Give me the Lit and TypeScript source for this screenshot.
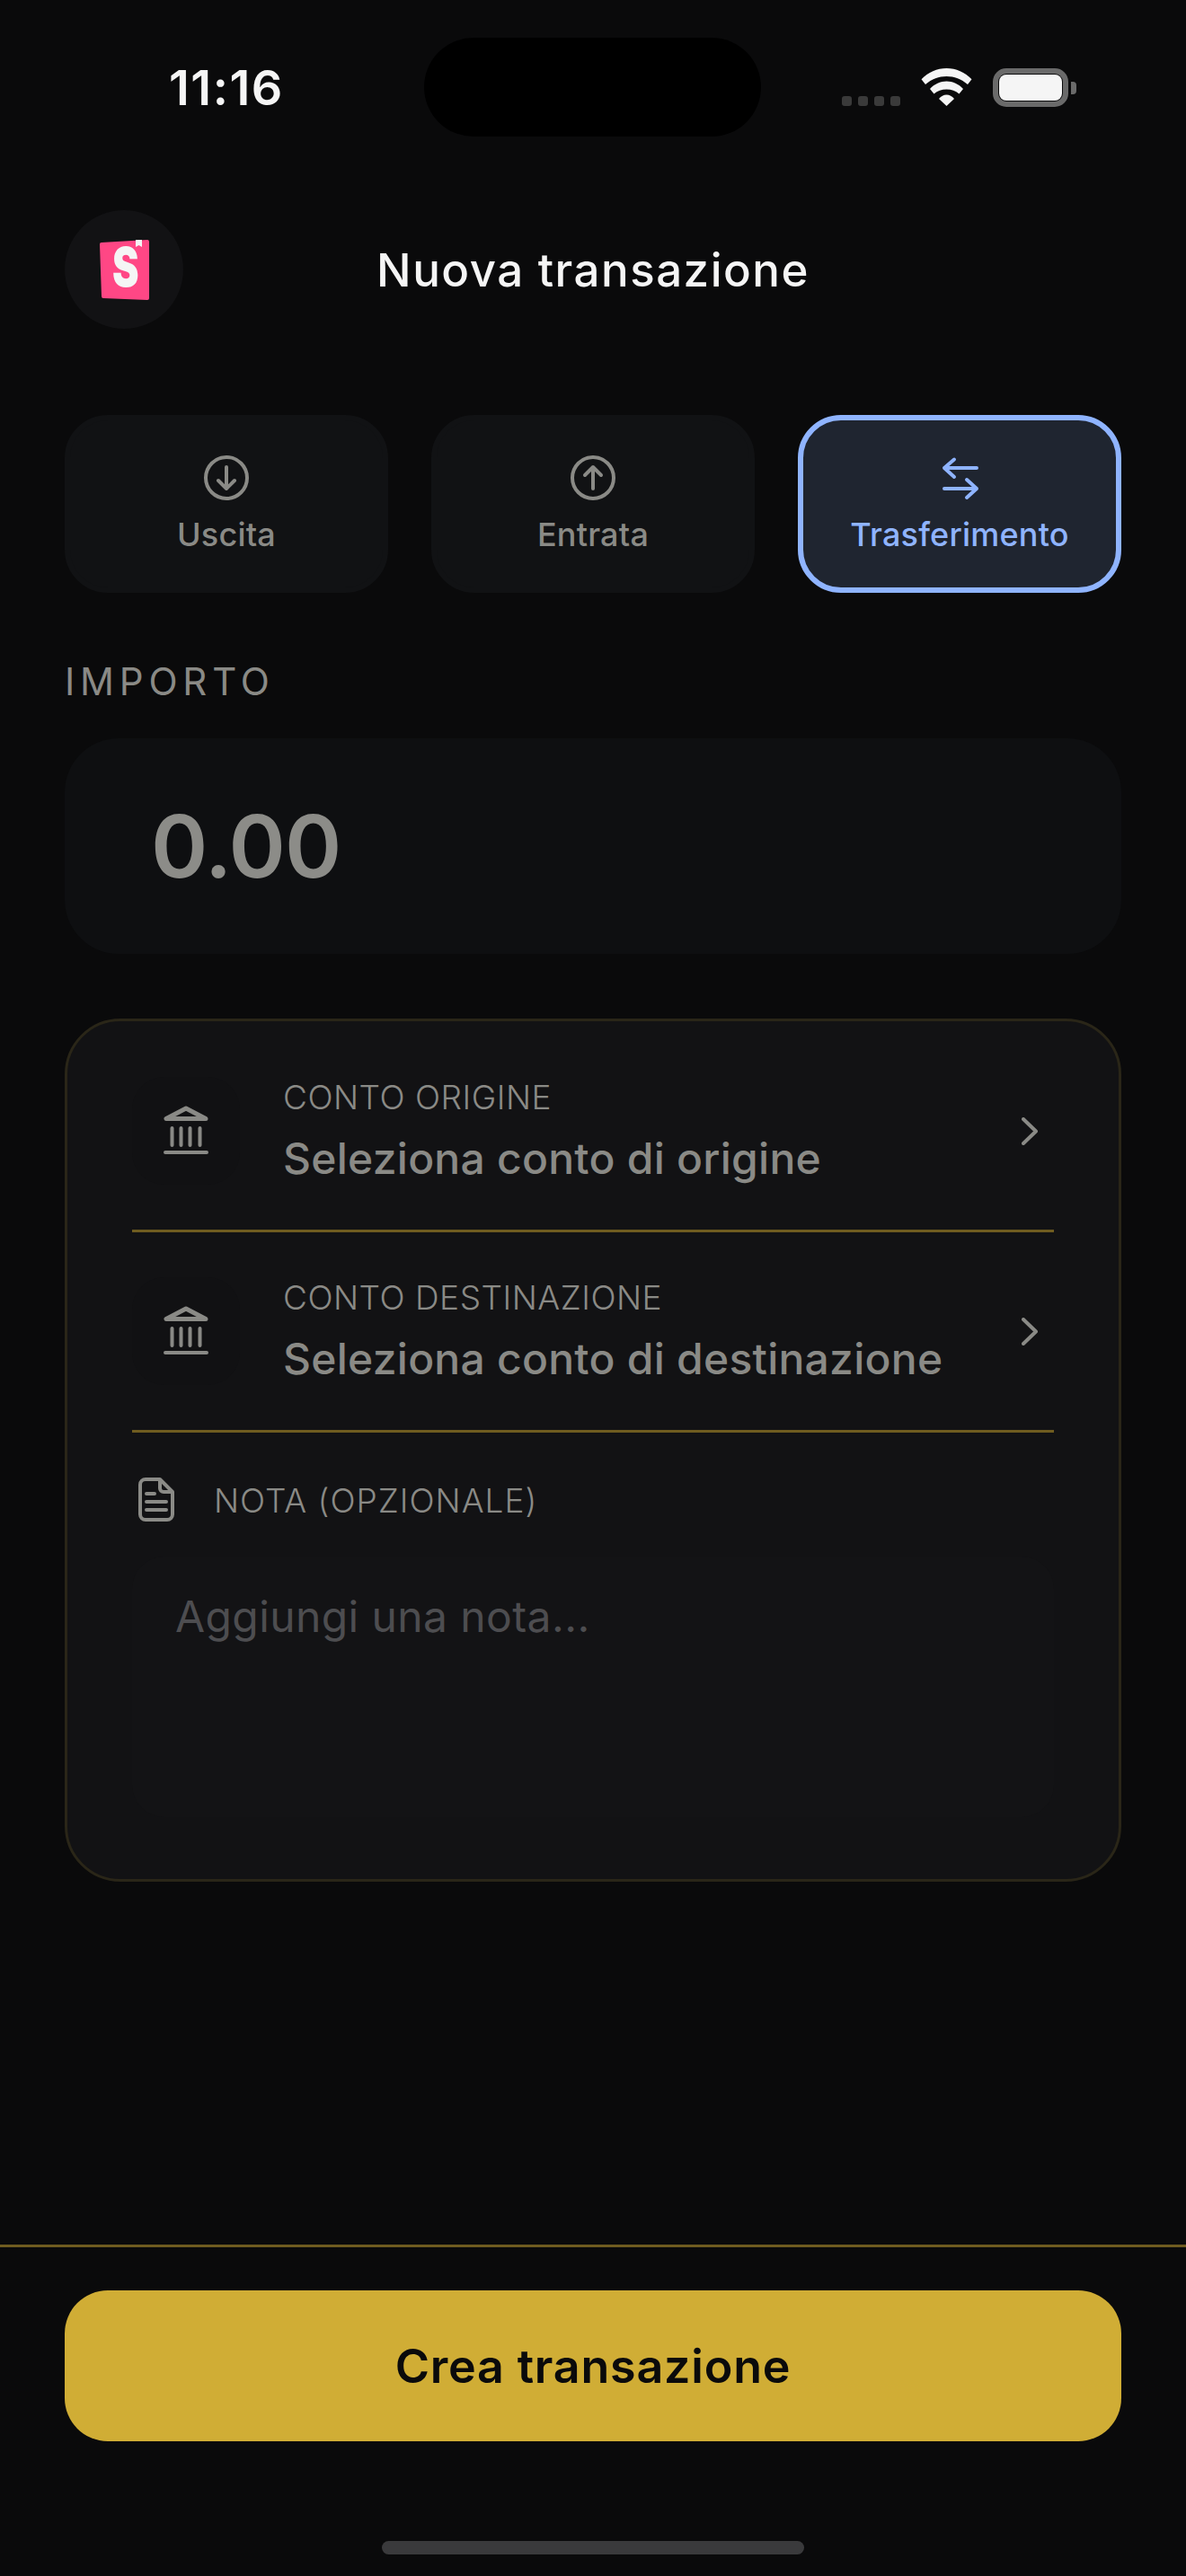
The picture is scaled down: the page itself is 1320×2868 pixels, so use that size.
import { LitElement, html, css } from 'lit';
import { customElement } from 'lit/decorators.js';

const circleDown = html`<svg class="ico" viewBox="0 0 60 60"><circle cx="30" cy="30" r="23"/><path d="M30 18v24M21 33l9 9 9-9"/></svg>`;
const circleUp = html`<svg class="ico" viewBox="0 0 60 60"><circle cx="30" cy="30" r="23"/><path d="M30 42V18M21 27l9-9 9 9"/></svg>`;
const swap = html`<svg class="ico" viewBox="0 0 60 60"><path d="M13 19h36M24 9.500 13 19l11 10M13 42h36M38 32l11 10-11 10"/></svg>`;
const bank = html`<svg class="bank" viewBox="0 0 60 60"><path class="roof" d="M30 5 8 16.500h44z"/><path d="M14.500 27v19M24.500 27v19M34.500 27v19M45.500 27v19M7 54h46"/></svg>`;
const chevron = html`<svg class="chev" viewBox="0 0 18 31"><path d="M2 2l14 13.500L2 29"/></svg>`;
const doc = html`<svg class="doc" viewBox="0 0 40 49"><path d="M8 2h16l14 14v25a6 6 0 0 1-6 6H8a6 6 0 0 1-6-6V8a6 6 0 0 1 6-6zM24 2v10a4 4 0 0 0 4 4h10M9 18h9M9 27h22M9 36h22"/></svg>`;

const TABS = [
  { label: 'Uscita', icon: circleDown, active: false },
  { label: 'Entrata', icon: circleUp, active: false },
  { label: 'Trasferimento', icon: swap, active: true },
];

const ROWS = [
  { label: 'CONTO ORIGINE', value: 'Seleziona conto di origine' },
  { label: 'CONTO DESTINAZIONE', value: 'Seleziona conto di destinazione' },
];

@customElement('app-root')
export class AppRoot extends LitElement {
  static styles = css`
    :host {
      display: block;
      font-family: Inter, 'Liberation Sans', sans-serif;
    }
    .app {
      width: 1320px;
      height: 2868px;
      background: #0a0a0b;
      display: flex;
      flex-direction: column;
      overflow: hidden;
    }

    /* status bar */
    .status {
      display: flex;
      align-items: center;
      height: 110px;
      margin-top: 42px;
      padding-left: 188px;
    }
    .time {
      width: 284px;
      font-size: 54px;
      font-weight: 600;
      color: #f5f5f5;
      letter-spacing: 1.500px;
    }
    .island {
      width: 375px;
      height: 110px;
      border-radius: 55px;
      background: #000;
    }
    .sys {
      display: flex;
      align-items: flex-end;
      margin-left: 90px;
      height: 43px;
    }
    .dots {
      display: flex;
      gap: 7px;
      margin-bottom: 1px;
    }
    .dots i {
      width: 11px;
      height: 11px;
      border-radius: 3px;
      background: #3a3a3a;
    }
    .wifi {
      width: 57px;
      height: 42px;
      margin: 0 23px 1px;
      fill: #f5f5f5;
    }
    .battery {
      box-sizing: border-box;
      width: 84px;
      height: 43px;
      padding: 1px;
      border: 6px solid #6a6a6a;
      border-radius: 15px;
    }
    .battery div {
      height: 100%;
      border-radius: 8px;
      background: #f5f5f5;
    }
    .nub {
      width: 6px;
      height: 14px;
      margin: 0 0 14px 3px;
      border-radius: 0 4px 4px 0;
      background: #6a6a6a;
    }

    /* header */
    .header {
      display: grid;
      grid-template-columns: 132px 1fr 132px;
      align-items: center;
      margin: 82px 72px 0;
      height: 132px;
    }
    .back {
      width: 132px;
      height: 132px;
      border-radius: 50%;
      background: #121214;
    }
    .back svg {
      display: block;
    }
    .title {
      text-align: center;
      font-size: 51px;
      font-weight: 500;
      color: #f5f5f5;
      letter-spacing: 1.500px;
    }

    /* type tabs */
    .tabs {
      display: grid;
      grid-template-columns: repeat(3, 1fr);
      gap: 48px;
      margin: 96px 72px 0;
    }
    .tab {
      box-sizing: border-box;
      height: 198px;
      display: flex;
      flex-direction: column;
      align-items: center;
      padding-top: 34px;
      gap: 11px;
      border: 6px solid #111214;
      border-radius: 48px;
      background: #111214;
      color: #8a8a86;
      font-size: 36px;
      font-weight: 500;
      letter-spacing: 0.200px;
    }
    .tab.active {
      border-color: #8fb4ff;
      background: #1f2530;
      color: #8fb4ff;
    }
    .ico {
      width: 60px;
      height: 60px;
      fill: none;
      stroke: currentColor;
      stroke-width: 4;
      stroke-linecap: round;
      stroke-linejoin: round;
    }

    /* amount */
    .section-label {
      margin: 74px 72px 0;
      font-size: 42px;
      line-height: 50px;
      letter-spacing: 5.800px;
      color: #8a8a86;
    }
    .amount {
      margin: 38px 72px 0;
      height: 240px;
      display: flex;
      align-items: center;
      padding-left: 96px;
      border-radius: 60px;
      background: #0e0f11;
      font-size: 96px;
      font-weight: 600;
      letter-spacing: -1px;
      color: #8c8c88;
    }

    /* form card */
    .card {
      box-sizing: border-box;
      margin: 72px 72px 0;
      height: 961px;
      padding: 12px 72px 0;
      border: 3px solid #2a2618;
      border-radius: 62px;
      background: #121214;
    }
    .row {
      display: flex;
      align-items: center;
      height: 220px;
      border-bottom: 3px solid #6f5c20;
    }
    .thumb {
      width: 120px;
      height: 120px;
      flex: none;
      display: flex;
      align-items: center;
      justify-content: center;
      border-radius: 36px;
      background: #111113;
    }
    .bank {
      width: 60px;
      height: 60px;
      fill: none;
      stroke: #8a8a86;
      stroke-width: 4;
      stroke-linecap: round;
      stroke-linejoin: round;
    }
    .roof {
      stroke-width: 5;
    }
    .texts {
      flex: 1;
      margin-left: 48px;
      padding-top: 3px;
    }
    .label {
      font-size: 37px;
      line-height: 48px;
      font-weight: 300;
      color: #8a8a86;
      letter-spacing: 0.500px;
    }
    .note-label {
      padding-top: 3px;
      letter-spacing: 1px;
    }
    .value {
      margin-top: 11px;
      font-size: 48px;
      line-height: 66px;
      font-weight: 500;
      color: #8a8a86;
      letter-spacing: 0.250px;
    }
    .chev {
      width: 18px;
      height: 31px;
      margin-right: 18px;
      fill: none;
      stroke: #8a8a86;
      stroke-width: 4;
      stroke-linecap: round;
      stroke-linejoin: round;
    }
    .note-head {
      display: flex;
      align-items: center;
      gap: 44px;
      height: 49px;
      margin-top: 50px;
      padding-left: 7px;
    }
    .doc {
      width: 40px;
      height: 49px;
      fill: none;
      stroke: #8a8a86;
      stroke-width: 4;
      stroke-linecap: round;
      stroke-linejoin: round;
    }
    .note {
      height: 290px;
      margin-top: 39px;
      padding: 34px 48px;
      box-sizing: border-box;
      border-radius: 36px;
      background: #131315;
      font-size: 48px;
      line-height: 66px;
      font-weight: 400;
      letter-spacing: 0.400px;
      color: #4d4d50;
    }

    /* footer */
    .footer {
      margin-top: auto;
      border-top: 3px solid #6f5c20;
      padding: 48px 72px 0;
    }
    .cta {
      height: 168px;
      display: flex;
      align-items: center;
      justify-content: center;
      border-radius: 48px;
      background: #d0ad35;
      color: #0a0a0b;
      font-size: 52px;
      font-weight: 600;
      letter-spacing: 0.800px;
    }
    .home {
      width: 470px;
      height: 15px;
      margin: 111px auto 24px;
      border-radius: 8px;
      background: #3a3a3c;
    }
  `;

  render() {
    return html`
      <div class="app">
        <div class="status">
          <div class="time">11:16</div>
          <div class="island"></div>
          <div class="sys">
            <div class="dots"><i></i><i></i><i></i><i></i></div>
            <svg class="wifi" viewBox="0 0 57 42">
              <path d="M.5 12.300C8 4.500 18 0 28.500 0S49 4.500 56.500 12.300L52 18C45 12 37 9 28.500 9S12 12 5 18z"/>
              <path d="M10 23c5-5.500 11.500-8.500 18.500-8.500S42 17.500 47 23l-4.500 5.500c-4-3.500-8.500-5-14-5s-10 1.500-14 5z"/>
              <path d="M20 34c2.500-3 5-4.500 8.500-4.500S34.500 31 37 34l-8.500 8z"/>
            </svg>
            <div class="battery"><div></div></div>
            <div class="nub"></div>
          </div>
        </div>

        <div class="header">
          <div class="back">
            <svg width="132" height="132" viewBox="0 0 132 132">
              <path d="M41 38l51-3v63l-49-2z" fill="#ff4785" stroke="#ff4785" stroke-width="4" stroke-linejoin="round"/>
              <path d="M79 33h7v8l-3.500-2-3.500 2z" fill="#f5f5f5"/>
              <text x="0" y="0" transform="translate(53 85) scale(.74 1)" font-family="Inter" font-weight="900" font-size="60" fill="#f5f5f5">S</text>
            </svg>
          </div>
          <div class="title">Nuova transazione</div>
        </div>

        <div class="tabs">
          ${TABS.map(
            (t) => html`<div class="tab ${t.active ? 'active' : ''}">${t.icon}<span>${t.label}</span></div>`
          )}
        </div>

        <div class="section-label">IMPORTO</div>
        <div class="amount">0.00</div>

        <div class="card">
          ${ROWS.map(
            (r) => html`
              <div class="row">
                <div class="thumb">${bank}</div>
                <div class="texts">
                  <div class="label">${r.label}</div>
                  <div class="value">${r.value}</div>
                </div>
                ${chevron}
              </div>
            `
          )}
          <div class="note-head">${doc}<span class="label note-label">NOTA (OPZIONALE)</span></div>
          <div class="note">Aggiungi una nota...</div>
        </div>

        <div class="footer">
          <div class="cta">Crea transazione</div>
          <div class="home"></div>
        </div>
      </div>
    `;
  }
}
